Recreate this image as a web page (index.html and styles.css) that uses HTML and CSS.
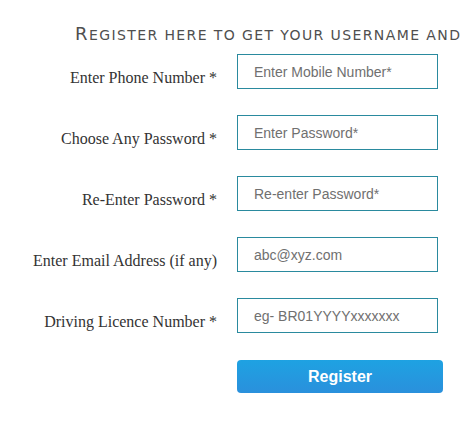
FILE: index.html
```html
<!DOCTYPE html>
<html>
<head>
<meta charset="utf-8">
<link rel="stylesheet" href="styles.css">
</head>
<body>
<div class="page">
  <h2 class="title">Register here to get your username and</h2>
  <form class="form">
    <label class="label">Enter Phone Number *</label>
    <input class="field" type="text" placeholder="Enter Mobile Number*">
    <label class="label">Choose Any Password *</label>
    <input class="field" type="password" placeholder="Enter Password*">
    <label class="label">Re-Enter Password *</label>
    <input class="field" type="password" placeholder="Re-enter Password*">
    <label class="label">Enter Email Address (if any)</label>
    <input class="field" type="text" placeholder="abc@xyz.com">
    <label class="label">Driving Licence Number *</label>
    <input class="field" type="text" placeholder="eg- BR01YYYYxxxxxxx">
    <span></span>
    <button class="btn" type="button">Register</button>
  </form>
</div>
</body>
</html>
```
FILE: styles.css
```css
html, body {
  margin: 0;
  padding: 0;
  background: #fff;
  overflow: hidden;
}
.page {
  width: 460px;
  height: 438px;
  overflow: hidden;
  padding-top: 24px;
  box-sizing: border-box;
}
.title {
  height: 20px;
  margin: 0 0 10px 75px;
  font-family: "DejaVu Sans", Verdana, sans-serif;
  text-transform: uppercase;
  font-weight: normal;
  font-size: 14px;
  line-height: 20px;
  letter-spacing: 1.4px;
  color: #4f4f4f;
  white-space: nowrap;
}
.title::first-letter {
  font-size: 18px;
}
.form {
  display: grid;
  grid-template-columns: 217px 201px;
  column-gap: 20px;
  row-gap: 26px;
}
.label {
  text-align: right;
  font-family: "Liberation Serif", "Times New Roman", serif;
  font-size: 16px;
  line-height: 18px;
  color: #333;
  padding-top: 15px;
  white-space: nowrap;
}
.field {
  box-sizing: border-box;
  width: 201px;
  height: 35px;
  margin: 0;
  border: 1px solid #2a8a9e;
  border-radius: 0;
  padding: 0 16px;
  font-family: "Liberation Sans", Arial, sans-serif;
  font-size: 14px;
  color: #333;
  outline: none;
}
.field::placeholder {
  color: #707070;
  opacity: 1;
}
.btn {
  margin-top: 1px;
  width: 206px;
  height: 33px;
  border: none;
  border-radius: 4px;
  background: linear-gradient(#1ea2e2, #2a90dc);
  color: #fff;
  font-family: "Liberation Sans", Arial, sans-serif;
  font-weight: bold;
  font-size: 16px;
  padding: 0;
}
```
